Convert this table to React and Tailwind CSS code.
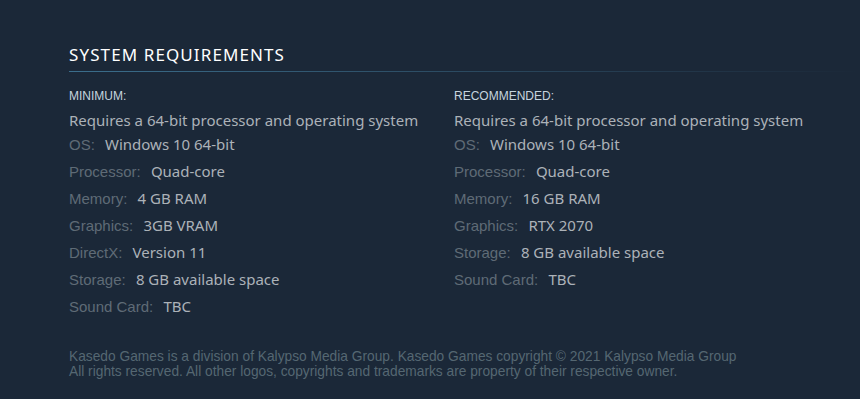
const MINIMUM = [
  ['OS:', 'Windows 10 64-bit'],
  ['Processor:', 'Quad-core'],
  ['Memory:', '4 GB RAM'],
  ['Graphics:', '3GB VRAM'],
  ['DirectX:', 'Version 11'],
  ['Storage:', '8 GB available space'],
  ['Sound Card:', 'TBC'],
];

const RECOMMENDED = [
  ['OS:', 'Windows 10 64-bit'],
  ['Processor:', 'Quad-core'],
  ['Memory:', '16 GB RAM'],
  ['Graphics:', 'RTX 2070'],
  ['Storage:', '8 GB available space'],
  ['Sound Card:', 'TBC'],
];

const ReqColumn = ({ title, rows }) => (
  <div className="w-[385px]">
    <div className="font-['Liberation_Sans',Arial,sans-serif] text-[12px] uppercase leading-[16px] text-[#c6d4df]">
      {title}
    </div>
    <div className="mt-[7px] font-['Noto_Sans',sans-serif] text-[15px] leading-[18px] text-[#acb2b8]">
      Requires a 64-bit processor and operating system
    </div>
    <ul className="mt-[6px]">
      {rows.map(([label, value]) => (
        <li key={label} className="h-[27px] leading-[18px]">
          <span className="font-['Liberation_Sans',Arial,sans-serif] text-[15px] text-[#5f6b76]">{label}</span>{' '}
          <span className="ml-[6px] font-['Noto_Sans',sans-serif] text-[15px] text-[#acb2b8]">{value}</span>
        </li>
      ))}
    </ul>
  </div>
);

export default function App() {
  return (
    <div className="min-h-[399px] w-full bg-[#1b2838] pl-[69px] pt-[43px]">
      <h2 className="font-['Noto_Sans',sans-serif] text-[17px] leading-[24px] tracking-[1.1px] text-white uppercase">
        System Requirements
      </h2>
      <div className="mt-[4px] h-px w-full bg-gradient-to-r from-[#3b6e8c] to-[#1b2838]" />
      <div className="mt-[16px] flex">
        <ReqColumn title="Minimum:" rows={MINIMUM} />
        <ReqColumn title="Recommended:" rows={RECOMMENDED} />
      </div>
      <p className="mt-[25px] font-['Liberation_Sans',Arial,sans-serif] text-[13.75px] leading-[15px] text-[#556772]">
        Kasedo Games is a division of Kalypso Media Group. Kasedo Games copyright © 2021 Kalypso Media Group
        <br />
        All rights reserved. All other logos, copyrights and trademarks are property of their respective owner.
      </p>
    </div>
  );
}
